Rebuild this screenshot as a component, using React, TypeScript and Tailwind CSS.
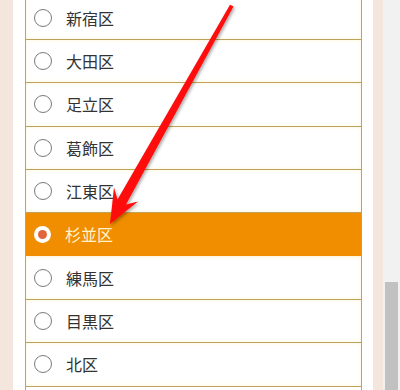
import React from "react";

const items = ["新宿区", "大田区", "足立区", "葛飾区", "江東区", "杉並区", "練馬区", "目黒区", "北区"];
const selected = "杉並区";

function Radio({ on }: { on: boolean }) {
  if (on) {
    return (
      <span className="flex h-[17px] w-[17px] shrink-0 items-center justify-center rounded-full bg-white">
        <span className="h-[9px] w-[9px] rounded-full bg-[#e2643a]" />
      </span>
    );
  }
  return <span className="h-[18px] w-[18px] shrink-0 rounded-full border-[1.3px] border-[#7a7a7a] bg-white" />;
}

export default function App() {
  return (
    <div className="relative flex h-[390px] w-[400px] overflow-hidden bg-white" style={{ fontFamily: '"Noto Sans CJK JP", "Noto Sans", sans-serif' }}>
      <div className="w-[13px] shrink-0 bg-[#f4e6dd]" />
      <div className="w-[360px] shrink-0 bg-white pl-[12px] pr-[11px]">
        <div className="-mt-[3.33px] h-[400px] border-x border-[#bfa35c]">
          {items.map((name) => {
            const on = name === selected;
            return (
              <div
                key={name}
                className={
                  on
                    ? "flex h-[43.33px] items-center gap-[14px] border-b border-[#fdf6e0] bg-[#f08e00] pl-[8px]"
                    : "flex h-[43.33px] items-center gap-[14px] border-b border-[#bfa35c] bg-white pl-[8px] shadow-[inset_0_0_4px_#fff6d8]"
                }
              >
                <Radio on={on} />
                <span className={on ? "text-[16px] leading-none text-[#fff3cc]" : "text-[16px] leading-none text-[#333333]"}>{name}</span>
              </div>
            );
          })}
        </div>
      </div>
      <div className="w-[10px] shrink-0 bg-[#f4e6dd]" />
      <div className="flex w-[17px] shrink-0 flex-col bg-[#f1f1f1] px-[2px] pt-[282px]">
        <div className="flex-1 bg-[#c1c1c1]" />
      </div>
      <svg className="pointer-events-none absolute left-0 top-0" width="400" height="390" viewBox="0 0 400 390">
        <defs>
          <filter id="sh" x="-20%" y="-20%" width="140%" height="140%">
            <feDropShadow dx="1.5" dy="1.5" stdDeviation="1.5" floodColor="#000" floodOpacity="0.35" />
          </filter>
        </defs>
        <polygon
          filter="url(#sh)"
          fill="#ff0a0a"
          points="110,224 138,201.5 126,204.5 233.5,6.5 230,4.8 117.5,199.5 114,187.5"
        />
      </svg>
    </div>
  );
}
